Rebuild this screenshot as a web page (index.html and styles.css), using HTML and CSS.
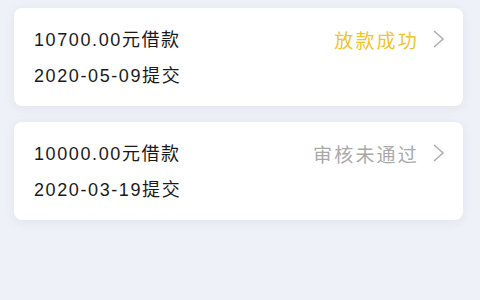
FILE: index.html
```html
<!DOCTYPE html>
<html lang="zh-CN">
<head>
<meta charset="utf-8">
<link rel="stylesheet" href="styles.css">
</head>
<body>
<div class="list">
  <div class="card">
    <div class="row">
      <span class="amount">10700.00元借款</span>
      <span class="status status-success">放款成功<svg class="chev" width="13" height="20" viewBox="0 0 13 20"><path d="M2 2 L11 10 L2 18" fill="none" stroke="#b0b0b0" stroke-width="1.6"/></svg></span>
    </div>
    <div class="date">2020-05-09提交</div>
  </div>
  <div class="card">
    <div class="row">
      <span class="amount">10000.00元借款</span>
      <span class="status status-fail">审核未通过<svg class="chev" width="13" height="20" viewBox="0 0 13 20"><path d="M2 2 L11 10 L2 18" fill="none" stroke="#b0b0b0" stroke-width="1.6"/></svg></span>
    </div>
    <div class="date">2020-03-19提交</div>
  </div>
</div>
</body>
</html>
```
FILE: styles.css
```css
html, body {
  margin: 0;
  padding: 0;
  background: #eff1f8;
  width: 480px;
  height: 300px;
  overflow: hidden;
}
.list {
  display: flex;
  flex-direction: column;
  gap: 16px;
  padding: 8px 17px 0 14px;
}
.card {
  background: #ffffff;
  border-radius: 8px;
  box-shadow: 0 2px 8px rgba(180, 186, 210, 0.25);
  height: 98px;
  box-sizing: border-box;
  padding: 20px 18px 18px 20px;
  font-family: "Liberation Sans", "Noto Sans CJK SC", sans-serif;
  color: #1a1a1a;
  font-size: 18px;
  letter-spacing: 1.6px;
}
.row {
  display: flex;
  justify-content: space-between;
  align-items: center;
  height: 24px;
  line-height: 24px;
}
.date {
  margin-top: 12px;
  height: 24px;
  line-height: 24px;
}
.status {
  display: flex;
  align-items: center;
  font-family: "Noto Sans CJK SC", sans-serif;
  font-size: 19px;
  letter-spacing: 2.2px;
}
.status-success { color: #f2c42c; }
.status-fail { color: #a9a9a9; }
.chev {
  margin-left: 13px;
  margin-top: -3px;
}
```
